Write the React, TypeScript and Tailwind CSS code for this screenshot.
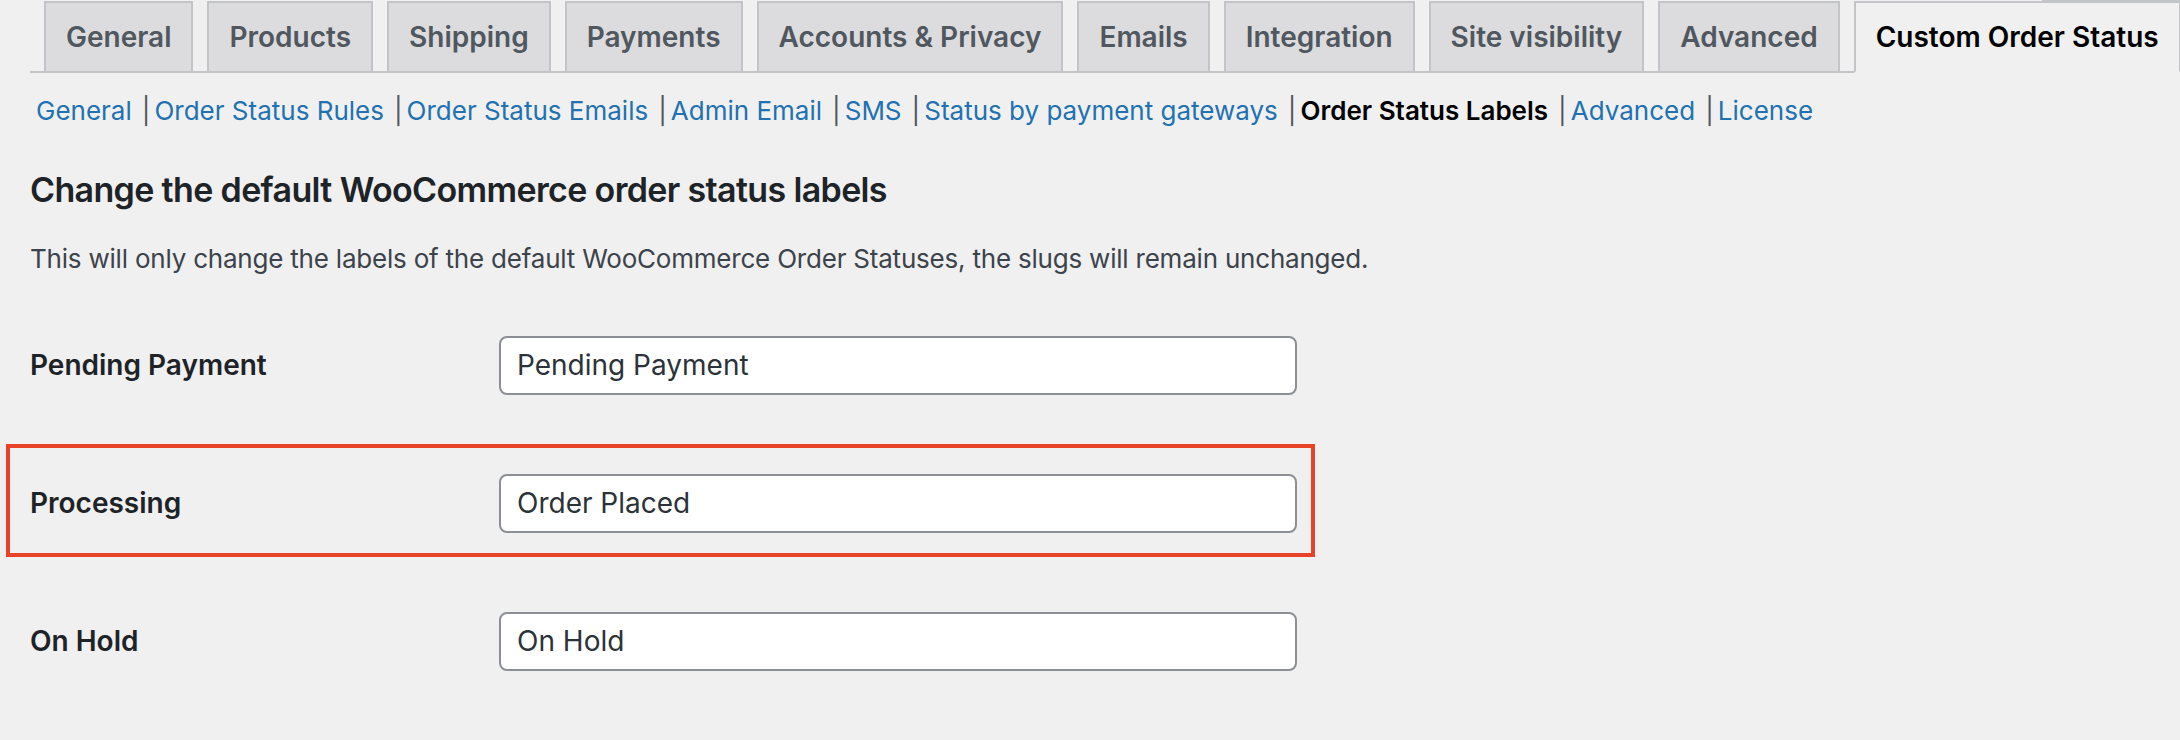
import React from "react";

const tabs = [
  "General",
  "Products",
  "Shipping",
  "Payments",
  "Accounts & Privacy",
  "Emails",
  "Integration",
  "Site visibility",
  "Advanced",
];

const subnav = [
  "General",
  "Order Status Rules",
  "Order Status Emails",
  "Admin Email",
  "SMS",
  "Status by payment gateways",
  "Order Status Labels",
  "Advanced",
  "License",
];

function Row({
  label,
  value,
  highlight,
}: {
  label: string;
  value: string;
  highlight?: boolean;
}) {
  return (
    <div className="relative flex h-[138px] items-center pl-[30px]">
      <div className="w-[469px] text-[28px] font-semibold text-[#1d2327]">{label}</div>
      <input
        readOnly
        value={value}
        className="h-[59px] w-[798px] rounded-[8px] border-2 border-[#8c8f94] bg-white px-[16px] text-[28px] text-[#2c3338] outline-none"
      />
      {highlight && (
        <div className="pointer-events-none absolute left-[6px] top-[10px] h-[113px] w-[1309px] border-[4px] border-[#e84228]" />
      )}
    </div>
  );
}

export default function App() {
  return (
    <div
      className="relative h-[740px] w-[2180px] overflow-hidden bg-[#f0f0f1]"
      style={{ fontFamily: 'Inter, "Noto Sans", sans-serif' }}
    >
      <div className="absolute right-0 top-0 h-[3px] w-[138px] bg-[#c3c4c7]" />
      <div className="ml-[30px] flex items-end border-b-2 border-[#c3c4c7] pt-[1px]">
        {tabs.map((t) => (
          <div
            key={t}
            className="-mb-[2px] ml-[14px] border-2 border-[#c3c4c7] bg-[#dcdcde] px-[20px] py-[10px] text-[28px] font-semibold leading-[48px] text-[#50575e] whitespace-nowrap"
          >
            {t}
          </div>
        ))}
        <div className="-mb-[2px] ml-[14px] border-2 border-[#c3c4c7] border-b-[#f0f0f1] bg-[#f0f0f1] px-[20px] py-[10px] text-[28px] font-semibold leading-[48px] text-black whitespace-nowrap">
          Custom Order Status
        </div>
      </div>

      <div className="mt-[20px] flex pl-[36px] text-[26px] leading-[36px] whitespace-nowrap">
        {subnav.map((s, i) => (
          <span key={s} className="flex">
            {s === "Order Status Labels" ? (
              <span className="font-semibold text-black">{s}</span>
            ) : (
              <span className="text-[#2271b1]">{s}</span>
            )}
            {i < subnav.length - 1 && (
              <span className="ml-[10px] mr-[4px] text-[#50575e]">|</span>
            )}
          </span>
        ))}
      </div>

      <h2 className="mt-[39px] pl-[30px] text-[34px] font-semibold leading-[44px] tracking-[-0.019em] text-[#1d2327]">
        Change the default WooCommerce order status labels
      </h2>
      <p className="mt-[29px] pl-[30px] text-[26px] leading-[36px] tracking-[-0.008em] text-[#3c434a]">
        This will only change the labels of the default WooCommerce Order Statuses, the slugs will remain unchanged.
      </p>

      <div className="mt-[19px]">
        <Row label="Pending Payment" value="Pending Payment" />
        <Row label="Processing" value="Order Placed" highlight />
        <Row label="On Hold" value="On Hold" />
      </div>
    </div>
  );
}
